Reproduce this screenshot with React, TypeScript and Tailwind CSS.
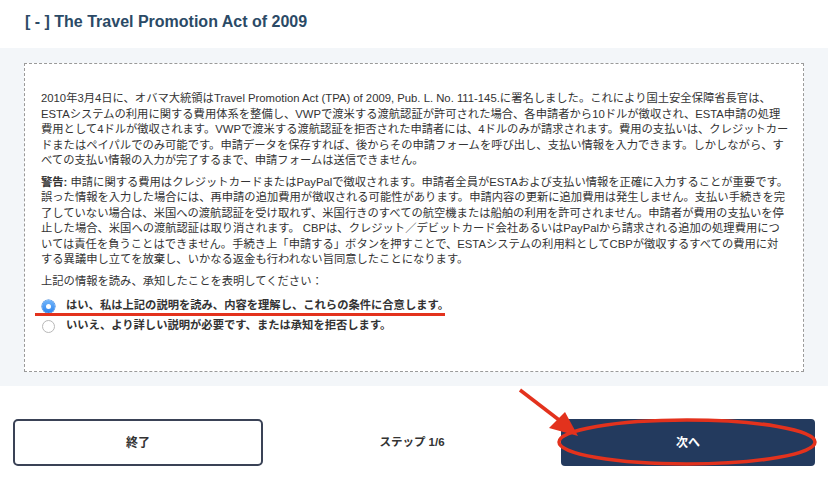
import React from 'react';

const font = { fontFamily: '"Liberation Sans", "Noto Sans CJK JP", sans-serif' };

const para1 = [
  '2010年3月4日に、オバマ大統領はTravel Promotion Act (TPA) of 2009, Pub. L. No. 111-145.に署名しました。これにより国土安全保障省長官は、',
  'ESTAシステムの利用に関する費用体系を整備し、VWPで渡米する渡航認証が許可された場合、各申請者から10ドルが徴収され、ESTA申請の処理',
  '費用として4ドルが徴収されます。VWPで渡米する渡航認証を拒否された申請者には、4ドルのみが請求されます。費用の支払いは、クレジットカー',
  'ドまたはペイパルでのみ可能です。申請データを保存すれば、後からその申請フォームを呼び出し、支払い情報を入力できます。しかしながら、す',
  'べての支払い情報の入力が完了するまで、申請フォームは送信できません。',
];

const para2 = [
  '誤った情報を入力した場合には、再申請の追加費用が徴収される可能性があります。申請内容の更新に追加費用は発生しません。支払い手続きを完',
  '了していない場合は、米国への渡航認証を受け取れず、米国行きのすべての航空機または船舶の利用を許可されません。申請者が費用の支払いを停',
  '止した場合、米国への渡航認証は取り消されます。 CBPは、クレジット／デビットカード会社あるいはPayPalから請求される追加の処理費用につ',
  'いては責任を負うことはできません。手続き上「申請する」ボタンを押すことで、ESTAシステムの利用料としてCBPが徴収するすべての費用に対',
  'する異議申し立てを放棄し、いかなる返金も行われない旨同意したことになります。',
];

function App() {
  return (
    <div className="relative w-[828px] h-[480px] bg-white overflow-hidden text-[#333]" style={font}>
      <div className="h-[48px] pl-[25px] pt-[11px]">
        <h1 className="text-[16px] font-bold text-[#2b4a66] leading-[22px]">[ - ] The Travel Promotion Act of 2009</h1>
      </div>

      <div className="bg-[#f3f6f9] px-6 pt-[15px] pb-[14px]">
        <div className="h-[309px] bg-white border border-dashed border-[#9a9a9a] pl-[16px] pr-[10px] pt-[27px] text-[11.3px] leading-[15.5px] whitespace-nowrap">
          <div>
            {para1.map((l) => (
              <div key={l}>{l}</div>
            ))}
          </div>
          <div className="mt-[6px]">
            <div>
              <span className="font-bold">警告:</span> 申請に関する費用はクレジットカードまたはPayPalで徴収されます。申請者全員がESTAおよび支払い情報を正確に入力することが重要です。
            </div>
            {para2.map((l) => (
              <div key={l}>{l}</div>
            ))}
          </div>
          <div className="mt-[6px]">上記の情報を読み、承知したことを表明してください：</div>
          <div className="mt-[7px] flex flex-col">
            <label className="flex items-center gap-[11px] h-[20px] font-bold text-[11.3px] pl-[1px]">
              <span className="w-[13px] h-[13px] rounded-full bg-gradient-to-b from-[#72b6fb] to-[#2a84ee] flex items-center justify-center shadow-[0_0_0_0.5px_#2a78d8]">
                <span className="w-[5px] h-[5px] rounded-full bg-white" />
              </span>
              はい、私は上記の説明を読み、内容を理解し、これらの条件に合意します。
            </label>
            <label className="flex items-center gap-[11px] h-[20px] font-bold text-[11.3px] pl-[1px]">
              <span className="w-[13px] h-[13px] rounded-full border border-[#b8b8b8] bg-white" />
              いいえ、より詳しい説明が必要です、または承知を拒否します。
            </label>
          </div>
        </div>
      </div>

      <div className="flex items-center justify-between px-[13px] pt-[33px]">
        <button className="w-[250px] h-[47px] rounded-[5px] border-2 border-[#3a4256] bg-white text-[12px] font-bold text-[#333]">
          終了
        </button>
        <span className="text-[11.5px] font-bold text-[#333]">ステップ 1/6</span>
        <button className="w-[254px] h-[47px] rounded-[4px] bg-[#233a5e] text-[12px] font-bold text-white">
          次へ
        </button>
      </div>

      {/* annotations */}
      <div className="absolute left-[35px] top-[313px] w-[410px] h-[3px] bg-[#e3321d]" />
      <svg className="absolute left-0 top-0 pointer-events-none" width="828" height="480">
        <ellipse cx="687" cy="442" rx="128" ry="22" fill="none" stroke="#e3321d" strokeWidth="3.5" />
        <line x1="520" y1="390" x2="563" y2="423" stroke="#e3321d" strokeWidth="3.5" />
        <polygon points="578,436 549,428 565,412" fill="#e3321d" />
      </svg>
    </div>
  );
}

export default App;
